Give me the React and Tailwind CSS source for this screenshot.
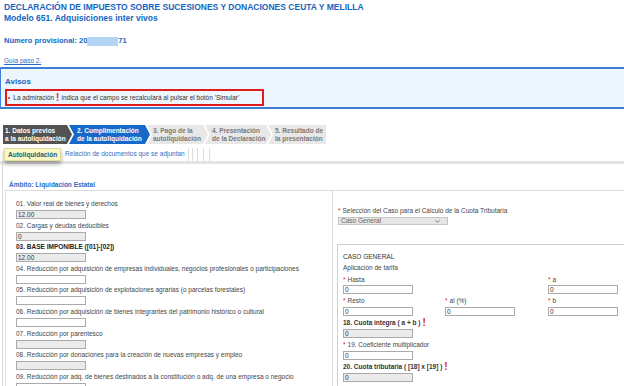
import { ChevronDown } from 'lucide-react'

const leftRows = [
  { label: '01. Valor real de bienes y derechos', value: '12.00', gray: true },
  { label: '02. Cargas y deudas deducibles', value: '0', gray: true },
  { label: '03. BASE IMPONIBLE ([01]-[02])', value: '12.00', gray: true, bold: true },
  { label: '04. Reducción por adquisición de empresas individuales, negocios profesionales o participaciones', value: '' },
  { label: '05. Reducción por adquisición de explotaciones agrarias (o parcelas forestales)', value: '' },
  { label: '06. Reducción por adquisición de bienes integrantes del patrimonio histórico o cultural', value: '' },
  { label: '07. Reducción por parentesco', value: '', gray: true },
  { label: '08. Reducción por donaciones para la creación de nuevas empresas y empleo', value: '', gray: true },
  { label: '09. Reducción por adq. de bienes destinados a la constitución o adq. de una empresa o negocio', value: '' },
]

function Field({ value, gray }) {
  return (
    <div
      className={
        'w-[70px] h-[9px] border border-[#aaa] px-[1px] text-[6.5px] leading-[7px] text-[#333] ' +
        (gray ? 'bg-[#ebebeb]' : 'bg-white')
      }
    >
      {value}
    </div>
  )
}

function Req() {
  return <span className="text-[#e02020] mr-[2px]">*</span>
}

function Bang() {
  return <span className="text-[#e81c1c] font-bold text-[10px] leading-[8px] ml-[2px]">!</span>
}

export default function App() {
  return (
    <div className="w-[624px] h-[386px] overflow-hidden bg-white font-['Liberation_Sans',Arial,sans-serif] text-[#444]">
      {/* Cabecera */}
      <div className="px-[4px] pt-[2px]">
        <h1 className="text-[8.5px] font-bold leading-[11px] text-[#1565c0]">
          DECLARACIÓN DE IMPUESTO SOBRE SUCESIONES Y DONACIONES CEUTA Y MELILLA
        </h1>
        <h2 className="text-[8.5px] font-bold leading-[11px] text-[#1565c0]">Modelo 651. Adquisiciones inter vivos</h2>
        <p className="mt-[12px] text-[7.5px] font-bold leading-[10px] text-[#1565c0] flex items-center">
          Número provisional: 20
          <span className="inline-block w-[31px] h-[9px] bg-[#b3d4f3] blur-[0.6px]"></span>
          71
        </p>
        <a className="block mt-[10px] text-[6.5px] leading-[9px] underline text-[#2a6cc0]">Guía paso 2.</a>
      </div>

      {/* Avisos */}
      <div className="mt-[2px] h-[42px] border-y-2 border-l border-[#3d7fd6] bg-[#edf5ff] px-[4px] pt-[8px]">
        <div className="text-[8px] font-bold leading-[10px] text-[#1565c0]">Avisos</div>
        <div className="mt-[2px] w-[259px] h-[17px] border-2 border-[#e01b1b] flex items-center pl-[1px] text-[6.5px] text-[#333] whitespace-nowrap">
          <span className="text-[#e01b1b] mr-[3px]">•</span>
          La admiración
          <span className="text-[#e81c1c] font-bold text-[10px] mx-[2px] leading-[8px]">!</span>
          indica que el campo se recalculará al pulsar el botón 'Simular'
        </div>
      </div>

      {/* Pasos */}
      <div className="mt-[16px] flex h-[19px] pl-[3px] text-[6.5px] font-bold leading-[7.5px]">
        <div className="w-[69px] bg-[#535353] text-white pl-[2px] flex flex-col justify-center [clip-path:polygon(0_0,calc(100%-5px)_0,100%_50%,calc(100%-5px)_100%,0_100%)]">
          <span>1. Datos previos</span>
          <span>a la autoliquidación</span>
        </div>
        <div className="-ml-[3px] w-[81px] bg-[#1668c9] text-white pl-[8px] flex flex-col justify-center [clip-path:polygon(0_0,calc(100%-5px)_0,100%_50%,calc(100%-5px)_100%,0_100%,5px_50%)]">
          <span>2. Cumplimentación</span>
          <span>de la autoliquidación</span>
        </div>
        <div className="-ml-[3px] w-[61px] bg-[#e8e8e8] text-[#7a7a7a] pl-[6px] flex flex-col justify-center [clip-path:polygon(0_0,calc(100%-5px)_0,100%_50%,calc(100%-5px)_100%,0_100%,5px_50%)]">
          <span>3. Pago de la</span>
          <span>autoliquidación</span>
        </div>
        <div className="-ml-[3px] w-[66px] bg-[#e8e8e8] text-[#7a7a7a] pl-[7px] flex flex-col justify-center [clip-path:polygon(0_0,calc(100%-5px)_0,100%_50%,calc(100%-5px)_100%,0_100%,5px_50%)]">
          <span>4. Presentación</span>
          <span>de la Declaración</span>
        </div>
        <div className="-ml-[3px] w-[58px] bg-[#e8e8e8] text-[#7a7a7a] pl-[7px] flex flex-col justify-center [clip-path:polygon(0_0,100%_0,100%_100%,0_100%,5px_50%)]">
          <span>5. Resultado de</span>
          <span>la presentación</span>
        </div>
      </div>

      {/* Pestañas */}
      <div className="mt-[3px] flex items-end h-[14px] pl-[4px] text-[6.5px] leading-[12px]">
        <div className="relative z-10 h-[13px] px-[3px] bg-[#fbf8c6] border border-[#e2dd9c] font-bold text-[#17607a] shadow-[0_3px_4px_rgba(0,0,0,0.35)]">
          Autoliquidación
        </div>
        <div className="h-[13px] pl-[4px] pr-[3px] text-[#2f6fc4] border-r border-[#ddd]">Relación de documentos que se adjuntan</div>
        <div className="flex h-[13px] ml-[3px]">
          <div className="w-[6px] border-x border-[#ddd]"></div>
          <div className="w-[6px] border-r border-[#ddd]"></div>
          <div className="w-[6px] border-r border-[#ddd]"></div>
        </div>
      </div>
      <div className="h-[3px] bg-[#e3e3e3]"></div>

      {/* Contenido */}
      <div className="ml-[2px] border-l border-[#d6d6d6] pl-[2px]">
        <div className="pt-[16px] pl-[4px] text-[6.5px] font-bold leading-[9px] text-[#2a6cbf]">Ámbito: Liquidación Estatal</div>
        <div className="mt-[1px] flex border-t border-l border-[#dcdcdc]">
          {/* Columna izquierda */}
          <div className="w-[327px] shrink-0 border-r border-[#dcdcdc] pl-[10px] pt-[7px]">
            {leftRows.map((r) => (
              <div key={r.label} className="mb-[0.6px]">
                <div
                  className={
                    'h-[12px] leading-[12px] text-[6.5px] whitespace-nowrap ' +
                    (r.bold ? 'font-bold text-[#222]' : 'text-[#444]')
                  }
                >
                  {r.label}
                </div>
                <Field value={r.value} gray={r.gray} />
              </div>
            ))}
          </div>

          {/* Columna derecha */}
          <div className="flex-1 pl-[4px] pt-[15px] text-[6.5px]">
            <div className="pl-[1px] leading-[9px] whitespace-nowrap">
              <Req />
              Selección del Caso para el Cálculo de la Cuota Tributaria
            </div>
            <div className="ml-[1px] mt-[2px] w-[110px] h-[8px] bg-[#e6e6e6] border border-[#c4c4c4] flex items-center justify-between pl-[2px] pr-[6px] text-[#666] leading-[6px]">
              <span>Caso General</span>
              <ChevronDown size={7} strokeWidth={2.5} className="text-[#555]" />
            </div>

            <div className="mt-[19px] border-t border-l border-[#cfcfcf] pl-[5px] pt-[6px] pb-[4px]">
              <div className="leading-[11px] text-[#333]">CASO GENERAL</div>
              <div className="leading-[11px]">Aplicación de tarifa</div>
              <div className="flex">
                <div className="w-[205px]">
                  <div className="h-[11px] leading-[11px] mt-[1px]"><Req />Hasta</div>
                  <Field value="0" />
                </div>
                <div>
                  <div className="h-[11px] leading-[11px] mt-[1px]"><Req />a</div>
                  <Field value="0" />
                </div>
              </div>
              <div className="flex">
                <div className="w-[102px]">
                  <div className="h-[13px] leading-[13px]"><Req />Resto</div>
                  <Field value="0" />
                </div>
                <div className="w-[103px]">
                  <div className="h-[13px] leading-[13px]"><Req />al (%)</div>
                  <Field value="0" />
                </div>
                <div>
                  <div className="h-[13px] leading-[13px]"><Req />b</div>
                  <Field value="0" />
                </div>
              </div>
              <div className="h-[13px] leading-[13px] font-bold text-[#333] flex items-center">
                18. Cuota íntegra ( a + b )<Bang />
              </div>
              <Field value="0" gray />
              <div className="h-[13px] leading-[13px]"><Req />19. Coeficiente multiplicador</div>
              <Field value="0" />
              <div className="h-[13px] leading-[13px] font-bold text-[#333] flex items-center">
                20. Cuota tributaria ( [18] x [19] )<Bang />
              </div>
              <Field value="0" gray />
            </div>
          </div>
        </div>
      </div>
    </div>
  )
}
